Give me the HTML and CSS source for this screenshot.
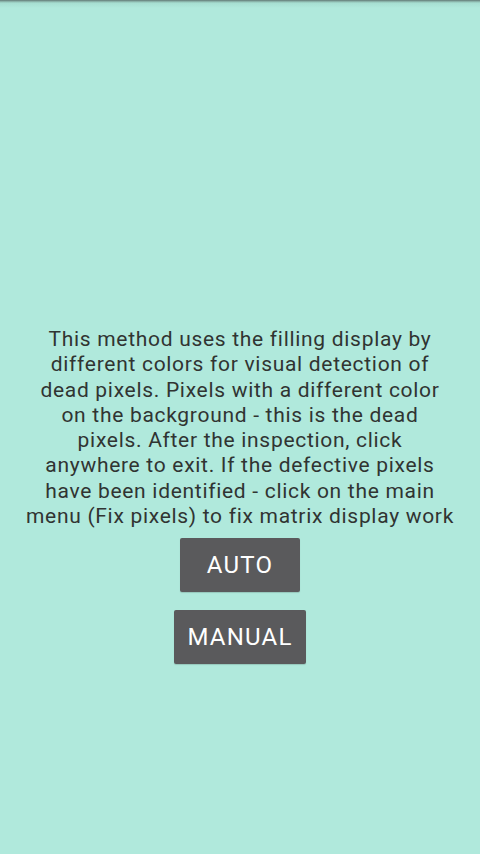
FILE: index.html
```html
<!DOCTYPE html>
<html>
<head>
<meta charset="utf-8">
<link rel="stylesheet" href="styles.css">
</head>
<body>
<div class="screen">
  <div class="topshade"></div>
  <main class="content">
    <p class="desc">This method uses the filling display by<br>different colors for visual detection of<br>dead pixels. Pixels with a different color<br>on the background - this is the dead<br>pixels. After the inspection, click<br>anywhere to exit. If the defective pixels<br>have been identified - click on the main<br>menu (Fix pixels) to fix matrix display work</p>
    <div class="buttons">
      <button class="btn btn-auto">AUTO</button>
      <button class="btn btn-manual">MANUAL</button>
    </div>
  </main>
</div>
</body>
</html>
```

FILE: styles.css
```css
html, body {
  margin: 0;
  padding: 0;
}
body {
  background: #b0e9dc;
  font-family: Roboto, "Noto Sans", sans-serif;
}
.screen {
  position: relative;
  width: 480px;
  height: 854px;
  overflow: hidden;
  background: #b0e9dc;
}
.topshade {
  position: absolute;
  left: 0;
  top: 0;
  width: 100%;
  height: 8px;
  background: linear-gradient(to bottom, #5f7572 0px, #7fa39b 1px, rgba(160,215,202,0.6) 3px, rgba(176,233,220,0) 8px);
}
.content {
  display: flex;
  flex-direction: column;
  align-items: center;
  padding-top: 327px;
}
.desc {
  margin: 0;
  padding: 0 10px;
  text-align: center;
  font-size: 21px;
  letter-spacing: 0.7px;
  line-height: 25.3px;
  color: #303432;
}
.buttons {
  display: flex;
  flex-direction: column;
  align-items: center;
  gap: 18px;
  margin-top: 9px;
}
.btn {
  height: 54px;
  border: none;
  border-radius: 2px;
  background: #5a5a5c;
  color: #ffffff;
  font-family: Roboto, "Noto Sans", sans-serif;
  font-size: 24px;
  letter-spacing: 1.2px;
  padding: 0;
  box-shadow: 0 1px 1px rgba(0,0,0,0.15);
}
.btn-auto {
  width: 120px;
}
.btn-manual {
  width: 132px;
}
```
